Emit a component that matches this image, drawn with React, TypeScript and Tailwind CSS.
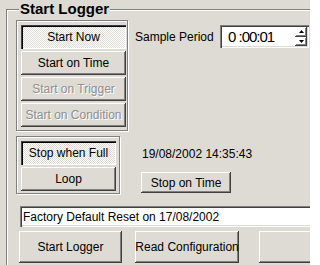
const raised =
  "shadow-[inset_-1px_-1px_0_#404040,inset_1px_1px_0_#ffffff,inset_-2px_-2px_0_#808080]";
const sunken =
  "shadow-[inset_1px_1px_0_#808080,inset_2px_2px_0_#404040,inset_-1px_-1px_0_#ffffff,inset_-2px_-2px_0_#dddbd4]";
const etched = "border border-[#808080] shadow-[inset_1px_1px_0_#ffffff,1px_1px_0_#ffffff]";

function Btn({
  children,
  className = "",
  pressed = false,
  disabled = false,
}: {
  children: React.ReactNode;
  className?: string;
  pressed?: boolean;
  disabled?: boolean;
}) {
  const face = pressed
    ? "shadow-[inset_1px_1px_0_#404040,inset_2px_2px_0_#000000,inset_-1px_-1px_0_#ffffff] bg-[image:repeating-conic-gradient(#ffffff_0%_25%,#dddbd4_0%_50%)] bg-[length:2px_2px]"
    : raised;
  const text = disabled ? "text-[#8e8e8e] [text-shadow:1px_1px_0_#ffffff]" : "text-black";
  return (
    <div className={`flex items-center justify-center whitespace-nowrap ${face} ${text} ${className}`}>
      {children}
    </div>
  );
}

function Arrow({ up }: { up?: boolean }) {
  return (
    <div className={`flex-1 flex items-center justify-center ${raised}`}>
      <svg width="5" height="3" viewBox="0 0 5 3">
        {up ? <path d="M2.5 0 L5 3 L0 3 Z" fill="#000" /> : <path d="M0 0 L5 0 L2.5 3 Z" fill="#000" />}
      </svg>
    </div>
  );
}

export default function App() {
  return (
    <div className="w-[310px] h-[265px] overflow-hidden bg-[#dddbd4] font-['Liberation_Sans',Arial,sans-serif] text-[12px] text-black">
      {/* Start Logger group */}
      <div className={`relative ml-[6px] mt-[9px] w-[340px] h-[300px] pl-[9px] pt-[10px] ${etched}`}>
        <span className="absolute left-[12px] top-[-10px] px-[1px] bg-[#dddbd4] text-[15px] leading-[17px] font-bold">
          Start Logger
        </span>

        {/* start mode + sample period */}
        <div className="flex items-start">
          <div className={`w-[112px] pl-[4px] pr-[1px] pt-[4px] pb-[3px] flex flex-col gap-[2px] ${etched}`}>
            <Btn pressed className="h-[24px]">Start Now</Btn>
            <Btn className="h-[24px]">Start on Time</Btn>
            <Btn disabled className="h-[24px]">Start on Trigger</Btn>
            <Btn disabled className="h-[24px]">Start on Condition</Btn>
          </div>
          <div className="flex items-center ml-[7px] mt-[5px]">
            <span className="w-[85px]">Sample Period</span>
            <div className={`w-[89px] h-[23px] bg-white flex items-stretch p-[2px] ${sunken}`}>
              <span className="flex-1 pl-[6px] text-[15px] leading-[19px] tracking-[-1px]">0 :00:01</span>
              <div className="w-[12px] flex flex-col">
                <Arrow up />
                <Arrow />
              </div>
            </div>
          </div>
        </div>

        {/* stop mode + date */}
        <div className="flex items-start mt-[5px]">
          <div className={`w-[104px] pl-[4px] pr-[3px] pt-[4px] pb-[2px] flex flex-col gap-[2px] ${etched}`}>
            <Btn pressed className="h-[24px]">Stop when Full</Btn>
            <Btn className="h-[24px]">Loop</Btn>
          </div>
          <div className="ml-[21px] flex flex-col items-start">
            <span className="mt-[11px] leading-[14px] pl-[1px]">19/08/2002 14:35:43</span>
            <Btn className="mt-[11px] w-[90px] h-[21px]">Stop on Time</Btn>
          </div>
        </div>

        {/* status field */}
        <div className={`ml-[4px] mt-[12px] w-[320px] h-[21px] bg-white flex items-center pl-[3px] ${sunken}`}>
          Factory Default Reset on 17/08/2002
        </div>

        {/* actions */}
        <div className="flex ml-[3px] mt-[4px]">
          <Btn className="w-[120px] h-[32px]">Start Logger</Btn>
          <Btn className="ml-[13px] w-[122px] h-[32px]">Read Configuration</Btn>
          <Btn className="ml-[20px] w-[100px] h-[32px]">{""}</Btn>
        </div>
      </div>
    </div>
  );
}
